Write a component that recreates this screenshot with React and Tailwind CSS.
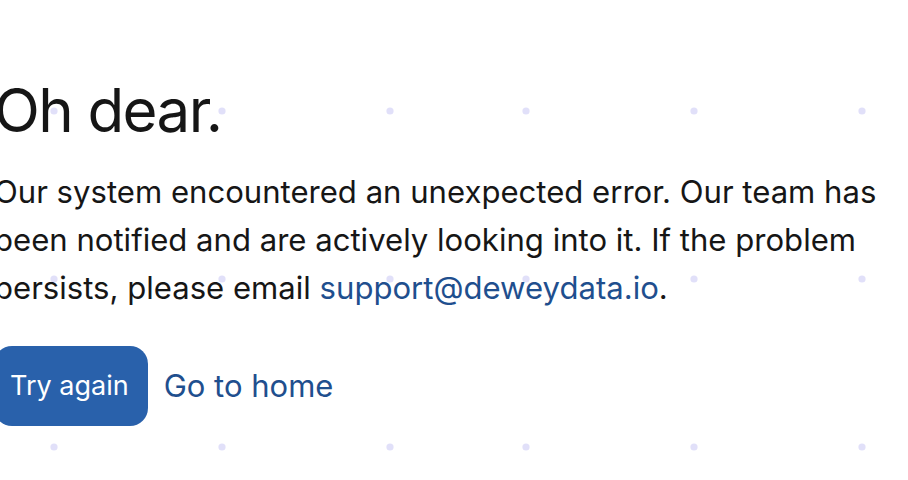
const DOTS_X = [54, 222, 390, 526, 694, 862];
const DOTS_Y = [111, 279, 447];

/* ── DotGrid (decorative background) ─────────────── */
function DotGrid() {
  return (
    <svg
      className="absolute inset-0 pointer-events-none"
      width="908"
      height="480"
      aria-hidden="true"
    >
      {DOTS_Y.map((y) =>
        DOTS_X.map((x) => (
          <circle key={`${x}-${y}`} cx={x} cy={y} r="3.6" fill="#e1e0f9" />
        ))
      )}
    </svg>
  );
}

export default function App() {
  return (
    <div className="relative w-[908px] h-[480px] overflow-hidden bg-white font-['Inter',sans-serif] text-[#161616]">
      <DotGrid />
      <div className="relative ml-[-6px] pt-[70px] w-[910px]">
        <h1 className="text-[60px] leading-[80px] font-normal tracking-[-1.6px]">
          Oh dear.
        </h1>
        <p className="mt-[18px] text-[31.1px] leading-[48px] w-[905px]">
          Our system encountered an unexpected error. Our team has been
          notified and are actively looking into it. If the problem persists,
          please email{" "}
          <a href="#" className="text-[#1f4f8e]">
            support@deweydata.io
          </a>
          .
        </p>
        <div className="mt-[34px] flex items-center gap-4">
          <button className="h-[80px] pl-[16px] pr-[19px] rounded-[18px] bg-[#2961ab] text-white text-[27px]">
            Try again
          </button>
          <a href="#" className="text-[#1f4f8e] text-[31px]">
            Go to home
          </a>
        </div>
      </div>
    </div>
  );
}
